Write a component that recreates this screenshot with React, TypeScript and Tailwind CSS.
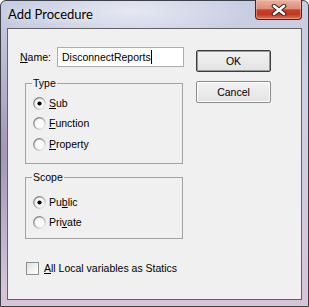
import React from "react";

const font = "font-['Liberation_Sans',Arial,sans-serif] text-[10.5px] leading-[13px] text-black";

function Radio({ checked }: { checked?: boolean }) {
  return (
    <svg width="13" height="13" viewBox="0 0 13 13" className="shrink-0">
      <defs>
        <linearGradient id="rg" x1="0" y1="0" x2="1" y2="1">
          <stop offset="0" stopColor="#d6d6d6" />
          <stop offset="1" stopColor="#ffffff" />
        </linearGradient>
        <linearGradient id="rs" x1="0" y1="0" x2="1" y2="1">
          <stop offset="0" stopColor="#6e6e6e" />
          <stop offset="0.6" stopColor="#b5b5b5" />
          <stop offset="1" stopColor="#ffffff" />
        </linearGradient>
      </defs>
      <circle cx="6.5" cy="6.5" r="5.8" fill="url(#rg)" stroke="url(#rs)" strokeWidth="1.2" />
      <circle cx="6.5" cy="6.5" r="4.3" fill="#fafafa" />
      {checked && <circle cx="6.5" cy="6.5" r="2.1" fill="#000" />}
    </svg>
  );
}

function U({ children }: { children: React.ReactNode }) {
  return <span className="underline underline-offset-[1px]">{children}</span>;
}

function RadioRow({ checked, children, className = "" }: { checked?: boolean; children: React.ReactNode; className?: string }) {
  return (
    <div className={`flex items-center h-[20px] gap-[3px] ${className}`}>
      <Radio checked={checked} />
      <span className={font}>{children}</span>
    </div>
  );
}

function Group({ title, className = "", children }: { title: string; className?: string; children: React.ReactNode }) {
  return (
    <div className={`relative border border-[#a3a3a3] ml-[5px] w-[158px] ${className}`}>
      <span className={`absolute -top-[7px] left-[6px] bg-[#f0f0f0] px-[1px] ${font}`}>{title}</span>
      {children}
    </div>
  );
}

export default function App() {
  return (
    <div className="w-[309px] h-[307px] overflow-hidden">
      <div className="w-[309px] h-[307px] border border-[#3c4048] rounded-t-[6px] px-[6px] pb-[6px] flex flex-col bg-[radial-gradient(ellipse_120px_30px_at_130px_10px,rgba(255,255,255,0.55),transparent),radial-gradient(ellipse_40px_140px_at_0px_150px,rgba(120,100,150,0.55),transparent),linear-gradient(180deg,#c7cde2_0%,#cfcfe3_30%,#d3c9de_70%,#d8c3d8_100%)]">
        <div className="h-[27px] flex justify-between items-start shrink-0">
          <span className="ml-[1px] mt-[5px] font-['Lato',sans-serif] text-[13px] leading-[16px] text-[#000] [text-shadow:0_0_6px_rgba(255,255,255,0.9)]">
            Add Procedure
          </span>
          <div className="-mt-[1px] w-[47px] h-[20px] rounded-b-[4px] border border-[#5a1d14] border-t-0 bg-[linear-gradient(180deg,#e9b1a2_0%,#dc8f7b_45%,#c6432b_52%,#c2361e_75%,#dd7458_100%)] shadow-[inset_0_0_0_1px_rgba(255,200,190,0.45)] flex items-center justify-center">
            <svg width="16" height="12" viewBox="0 0 16 12">
              <path d="M3 2 L13 10 M13 2 L3 10" stroke="#3b2320" strokeWidth="4.6" strokeLinecap="round" />
              <path d="M3 2 L13 10 M13 2 L3 10" stroke="#ffffff" strokeWidth="2.6" strokeLinecap="round" />
            </svg>
          </div>
        </div>
        <div className="flex-1 border border-[#626262] bg-[#f0f0f0] flex pl-[12px]">
          <div className="w-[176px] flex flex-col">
            <div className="mt-[18px] flex items-center h-[20px]">
              <span className={`w-[37px] ${font}`}>
                <U>N</U>ame:
              </span>
              <div className="w-[127px] h-[20px] border border-[#abadb3] bg-white flex items-center pl-[4px]">
                <span className={font}>DisconnectReports</span>
                <span className="w-[1px] h-[14px] bg-black" />
              </div>
            </div>

            <Group title="Type" className="mt-[16px] h-[81px] pt-[9px] pl-[7px]">
              <RadioRow checked>
                <U>S</U>ub
              </RadioRow>
              <RadioRow>
                <U>F</U>unction
              </RadioRow>
              <RadioRow className="mt-[1px]">
                <U>P</U>roperty
              </RadioRow>
            </Group>

            <Group title="Scope" className="mt-[13px] h-[62px] pt-[14px] pl-[7px]">
              <RadioRow checked>
                Pu<U>b</U>lic
              </RadioRow>
              <RadioRow>
                Pri<U>v</U>ate
              </RadioRow>
            </Group>

            <div className="mt-[23px] ml-[6px] flex items-center gap-[5px]">
              <div className="w-[13px] h-[13px] border border-[#8e8f8f] bg-[linear-gradient(135deg,#e2e2e2,#ffffff)] shrink-0" />
              <span className={font}>
                <U>A</U>ll Local variables as Statics
              </span>
            </div>
          </div>

          <div className="flex flex-col pt-[21px]">
            <div className={`w-[75px] h-[22px] border border-[#3c3c3c] rounded-[2px] bg-[linear-gradient(180deg,#f2f2f2,#e3e3e3)] shadow-[inset_0_0_0_1px_#9a9a9a] flex items-center justify-center ${font}`}>
              OK
            </div>
            <div className={`mt-[9px] w-[75px] h-[22px] border border-[#8a8a8a] rounded-[2px] bg-[linear-gradient(180deg,#f2f2f2,#e3e3e3)] shadow-[inset_0_0_0_1px_#ffffff] flex items-center justify-center ${font}`}>
              Cancel
            </div>
          </div>
        </div>
      </div>
    </div>
  );
}
